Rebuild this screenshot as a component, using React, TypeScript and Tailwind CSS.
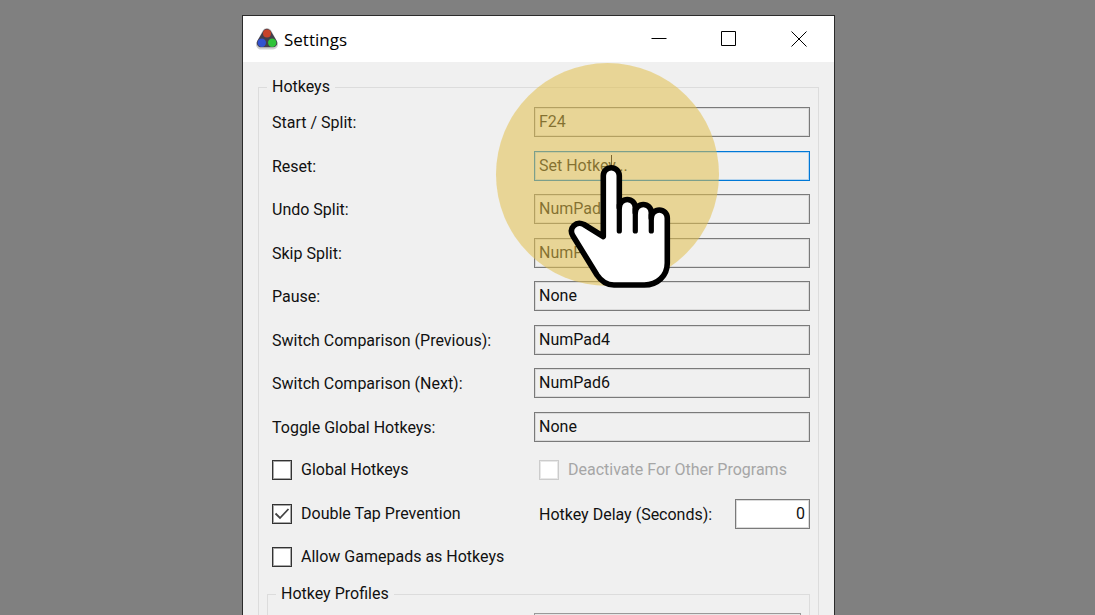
import { useState } from "react";
import type { ReactNode } from "react";

type Hotkey = { id: string; label: string; value: string; active?: boolean };

const hotkeys: Hotkey[] = [
  { id: "split", label: "Start / Split:", value: "F24" },
  { id: "reset", label: "Reset:", value: "Set Hotkey...", active: true },
  { id: "undo", label: "Undo Split:", value: "NumPad8" },
  { id: "skip", label: "Skip Split:", value: "NumPad2" },
  { id: "pause", label: "Pause:", value: "None" },
  { id: "previous", label: "Switch Comparison (Previous):", value: "NumPad4" },
  { id: "next", label: "Switch Comparison (Next):", value: "NumPad6" },
  { id: "toggle", label: "Toggle Global Hotkeys:", value: "None" },
];

function AppIcon() {
  return (
    <svg width="24" height="24" viewBox="0 0 24 24" aria-hidden="true">
      <path d="M12 6 6 17.500h12z" fill="#cfcfcf" stroke="#cfcfcf" strokeWidth="10" strokeLinejoin="round" />
      <path d="M12 6 6 16h12z" fill="#443f4c" stroke="#443f4c" strokeWidth="8.500" strokeLinejoin="round" />
      <circle cx="12" cy="6.500" r="4" fill="#c8432a" />
      <circle cx="6.800" cy="15.800" r="4.200" fill="#3152d0" />
      <circle cx="17.200" cy="15.800" r="4.200" fill="#2fc338" />
    </svg>
  );
}

function TitleButton({ label, children }: { label: string; children: ReactNode }) {
  return (
    <button type="button" aria-label={label} className="flex w-[70px] items-center justify-center">
      <svg width="16" height="16" viewBox="0 0 16 16" fill="none" stroke="#000" aria-hidden="true">
        {children}
      </svg>
    </button>
  );
}

function Row({ children }: { children: ReactNode }) {
  return (
    <div className="pl-[5px] odd:h-11 even:h-[43px]">
      <div className="flex h-[30px] items-center">{children}</div>
    </div>
  );
}

function CheckBox({ label, checked = false, disabled = false }: { label: string; checked?: boolean; disabled?: boolean }) {
  const [on, setOn] = useState(checked);
  return (
    <label className={disabled ? "flex items-center gap-[9px] text-[#a6a6a6]" : "flex items-center gap-[9px]"}>
      <span className="grid size-5 place-items-center">
        <input
          type="checkbox"
          checked={on}
          disabled={disabled}
          onChange={() => setOn(!on)}
          className="col-start-1 row-start-1 size-5 appearance-none border border-[#333] bg-white shadow-[inset_0_0_0_1px_#a8a8a8] disabled:border-[#cccccc] disabled:shadow-[inset_0_0_0_1px_#e8e8e8]"
        />
        {on && (
          <svg viewBox="0 0 20 20" className="pointer-events-none col-start-1 row-start-1 size-5" fill="none" stroke="#444" strokeWidth="1.8" aria-hidden="true">
            <path d="M3.500 9.500l4.500 4.500 8.500-9" />
          </svg>
        )}
      </span>
      {label}
    </label>
  );
}

function Pointer() {
  return (
    <svg width="120" height="140" viewBox="0 0 120 140" className="pointer-events-none absolute top-[139px] left-[317px]" aria-hidden="true">
      <path d="M51.500 0v12" stroke="#7a6530" />
      <path
        d="M43.3 81.5V20.7a8 8 0 0 1 16 0V52.5a8 8 0 0 1 16 0V57.5a8 8 0 0 1 16 0V63a8 8 0 0 1 16 0V108c0 13-10 22-23 22H54c-7 0-13-4-17-10L12.7 80.5C8.5 73 16 65.500 24 69.500Z"
        fill="#fff"
        stroke="#000"
        strokeWidth="5.6"
        strokeLinejoin="round"
      />
      <path d="M59.300 50V76M75.300 54V76M91.300 60V76" stroke="#000" strokeWidth="5.200" strokeLinecap="round" />
    </svg>
  );
}

export default function App() {
  return (
    <main className="flex h-screen justify-center overflow-hidden bg-[#808080] pt-[15px] pr-[18px] font-['Roboto',sans-serif] text-base leading-5 text-[#111]">
      <section className="relative flex w-full max-w-[593px] flex-col border border-b-0 border-[#2b2b2b] bg-[#f0f0f0]">
        <header className="flex h-[46px] shrink-0 bg-white">
          <div className="flex flex-1 items-center gap-[5px] pl-3">
            <AppIcon />
            <h1 className="pt-[2px] font-['Open_Sans',sans-serif] text-[17px] leading-6 text-black">Settings</h1>
          </div>
          <TitleButton label="Minimize">
            <path d="M.5 7.500h15" />
          </TitleButton>
          <TitleButton label="Maximize">
            <path d="M.5.5h14v14H.5z" />
          </TitleButton>
          <TitleButton label="Close">
            <path d="M.5.5l15 15M15.500.5l-15 15" />
          </TitleButton>
        </header>

        <form className="px-[15px] pt-[15px]">
          <fieldset className="min-w-0 border border-[#dcdcdc] px-2 pb-4">
            <legend className="px-[5px]">Hotkeys</legend>
            <div className="pt-[10px]">
              {hotkeys.map((key) => (
                <Row key={key.id}>
                  <label htmlFor={key.id} className="w-[262px] shrink-0 pt-[2px]">
                    {key.label}
                  </label>
                  <input
                    id={key.id}
                    readOnly
                    defaultValue={key.value}
                    className={
                      key.active
                        ? "h-[30px] min-w-0 flex-1 border border-[#0078d7] bg-[#f0f0f0] px-1 pb-[2px] shadow-[inset_0_0_0_1px_#b5d4ee] outline-none"
                        : "h-[30px] min-w-0 flex-1 border border-[#7a7a7a] bg-[#f0f0f0] px-1 pb-[2px] shadow-[inset_0_0_0_1px_#dadada] outline-none"
                    }
                  />
                </Row>
              ))}
              <Row>
                <div className="w-[267px] shrink-0">
                  <CheckBox label="Global Hotkeys" />
                </div>
                <CheckBox label="Deactivate For Other Programs" disabled />
              </Row>
              <Row>
                <div className="w-[267px] shrink-0">
                  <CheckBox label="Double Tap Prevention" checked />
                </div>
                <label htmlFor="delay" className="flex-1 pt-[2px]">
                  Hotkey Delay (Seconds):
                </label>
                <input
                  id="delay"
                  defaultValue="0"
                  className="h-[30px] w-[75px] border border-[#7a7a7a] bg-white px-1 pb-[2px] text-right shadow-[inset_0_0_0_1px_#dadada] outline-none"
                />
              </Row>
              <Row>
                <CheckBox label="Allow Gamepads as Hotkeys" />
              </Row>
            </div>
            <fieldset className="min-w-0 border border-[#dcdcdc] px-2 pb-4">
              <legend className="px-[5px] leading-4">Hotkey Profiles</legend>
              <div className="flex pt-[11px] pl-[258px]">
                <select aria-label="Hotkey Profiles" className="h-8 flex-1 appearance-none border border-[#999] bg-[#e5e5e5]" />
              </div>
            </fieldset>
          </fieldset>
        </form>

        <div className="pointer-events-none absolute top-[47px] left-[253px] size-[223px] rounded-full bg-[#e1bf4c]/55" />
        <Pointer />
      </section>
    </main>
  );
}
